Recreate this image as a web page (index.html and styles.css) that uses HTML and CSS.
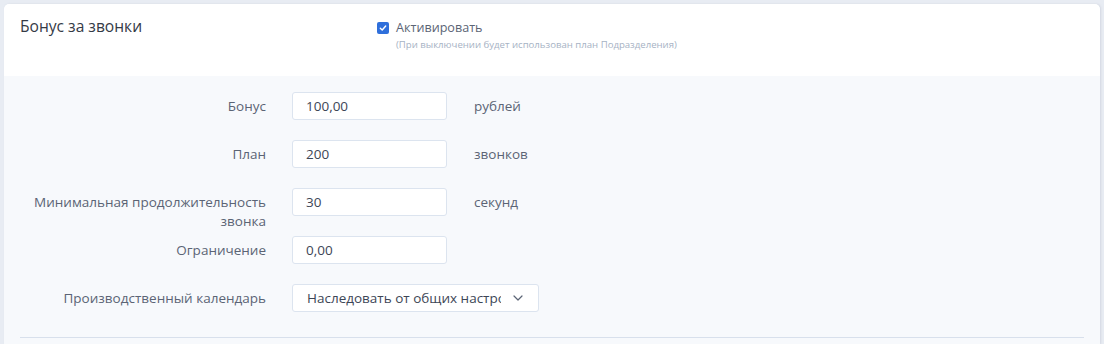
FILE: index.html
```html
<!DOCTYPE html>
<html lang="ru">
<head>
  <meta charset="UTF-8">
  <title>Бонус за звонки</title>
  <link rel="stylesheet" href="styles.css">
</head>
<body>

<div class="card">
  <!-- Заголовок -->
  <div class="card-header">
    <div class="card-title">Бонус за звонки</div>
    <div class="activate">
      <label class="check">
        <span class="check-box">
          <svg width="8" height="8" viewBox="0 0 8 8"><path d="M1.3 4.2 L3.2 6 L6.7 2" fill="none" stroke="#fff" stroke-width="1.4" stroke-linecap="round" stroke-linejoin="round"/></svg>
        </span>
        <span class="check-label">Активировать</span>
      </label>
      <div class="hint">(При выключении будет использован план Подразделения)</div>
    </div>
  </div>

  <!-- Поля -->
  <div class="card-body">
    <div class="form-row">
      <div class="form-label">Бонус</div>
      <input class="form-input" type="text" value="100,00">
      <div class="form-unit">рублей</div>
    </div>
    <div class="form-row">
      <div class="form-label">План</div>
      <input class="form-input" type="text" value="200">
      <div class="form-unit">звонков</div>
    </div>
    <div class="form-row">
      <div class="form-label">Минимальная продолжительность звонка</div>
      <input class="form-input" type="text" value="30">
      <div class="form-unit">секунд</div>
    </div>
    <div class="form-row">
      <div class="form-label">Ограничение</div>
      <input class="form-input" type="text" value="0,00">
    </div>
    <div class="form-row form-row-select">
      <div class="form-label">Производственный календарь</div>
      <div class="form-select">
        <span class="select-text">Наследовать от общих настроек</span>
        <svg class="select-arrow" width="10" height="6" viewBox="0 0 10 6"><path d="M1 1 L5 5 L9 1" fill="none" stroke="#5b6475" stroke-width="1.2" stroke-linecap="round" stroke-linejoin="round"/></svg>
      </div>
    </div>
    <div class="card-divider"></div>
  </div>
</div>

</body>
</html>
```

FILE: styles.css
```css
html, body {
  margin: 0;
  padding: 0;
  height: 344px;
  overflow: hidden;
  font-family: 'Open Sans', 'Noto Sans', sans-serif;
  background-color: #e8ecf3;
}

body {
  box-sizing: border-box;
  padding: 4px 4px 0 4px;
}

.card {
  background-color: #f7f9fc;
  border-radius: 5px 5px 0 0;
  box-shadow: 1px 0 2px rgba(150, 160, 180, 0.25);
  height: 340px;
  overflow: hidden;
}

.card-header {
  display: flex;
  height: 72px;
  padding: 0 16px;
  background-color: #ffffff;
  border-radius: 5px 5px 0 0;
}

.card-title {
  width: 357px;
  padding-top: 11px;
  font-size: 15.6px;
  line-height: 22px;
  color: #343a46;
}

.activate {
  padding-top: 14px;
}

.check {
  display: flex;
  align-items: center;
  gap: 7px;
}

.check-box {
  display: flex;
  align-items: center;
  justify-content: center;
  width: 12px;
  height: 12px;
  border-radius: 2px;
  background-color: #2f6fdb;
}

.check-label {
  font-size: 12.6px;
  line-height: 19px;
  color: #5b6475;
}

.hint {
  margin-left: 19px;
  margin-top: 1px;
  font-size: 9.6px;
  line-height: 14px;
  color: #a6b2c4;
}

.card-body {
  padding: 16px 16px 0 16px;
}

.form-row {
  display: flex;
  height: 28px;
  margin-bottom: 20px;
}

.form-row-select {
  margin-top: 1px;
}

.form-label {
  width: 246px;
  margin-right: 26px;
  padding-top: 5px;
  text-align: right;
  font-size: 13.5px;
  line-height: 19px;
  color: #5b6475;
}

.form-input {
  box-sizing: border-box;
  width: 155px;
  height: 28px;
  margin: 0;
  padding: 0 13px;
  border: 1px solid #dce4ef;
  border-radius: 3px;
  background-color: #ffffff;
  font-family: inherit;
  font-size: 13.5px;
  color: #3d4656;
  outline: none;
}

.form-unit {
  margin-left: 27px;
  padding-top: 5px;
  font-size: 13.5px;
  line-height: 19px;
  color: #5b6475;
}

.form-select {
  box-sizing: border-box;
  display: flex;
  align-items: center;
  width: 247px;
  height: 28px;
  padding: 0 15px 0 14px;
  border: 1px solid #dce4ef;
  border-radius: 3px;
  background-color: #ffffff;
}

.select-text {
  width: 194px;
  overflow: hidden;
  white-space: nowrap;
  font-size: 13.5px;
  color: #3d4656;
}

.select-arrow {
  margin-left: auto;
}

.card-divider {
  margin-top: 25px;
  border-top: 1px solid #d8e0ec;
}
```
